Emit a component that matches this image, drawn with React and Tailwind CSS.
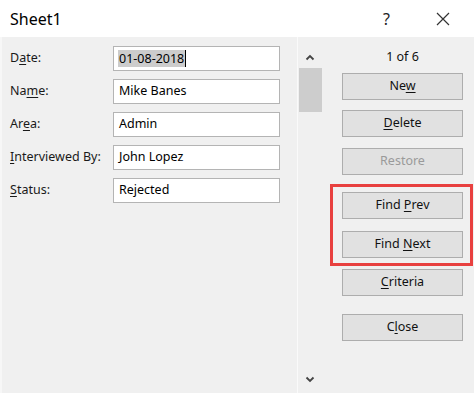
import React from 'react';

const font = { fontFamily: '"Noto Sans", "Segoe UI", sans-serif' };

function Key({ children }) {
  return <span className="underline underline-offset-2 decoration-1">{children}</span>;
}

function Field({ label, value, selected }) {
  return (
    <div className="flex items-center h-[25px]">
      <div className="w-[111px] shrink-0 whitespace-nowrap pl-[8px] text-[12.5px] text-[#1a1a1a]">{label}</div>
      <div className="w-[167px] shrink-0 h-[25px] bg-white border border-[#b4b4b4] flex items-center pl-[4px] text-[12.5px] text-black">
        {selected ? (
          <>
            <span className="bg-[#cccccc] px-[1px] leading-[17px]">{value}</span>
            <span className="w-px h-[17px] bg-black" />
          </>
        ) : (
          <span className="pl-[1px]">{value}</span>
        )}
      </div>
    </div>
  );
}

function Btn({ children, disabled }) {
  return (
    <button
      className={
        'w-[121px] h-[27px] bg-[#e1e1e1] border border-[#adadad] text-[12.5px] flex items-center justify-center ' +
        (disabled ? 'text-[#9a9a9a]' : 'text-[#111111]')
      }
    >
      <span>{children}</span>
    </button>
  );
}

function Chevron({ up }) {
  return (
    <svg width="10" height="7" viewBox="0 0 10 7">
      <polyline
        points={up ? '1.5,5.5 5,2 8.5,5.5' : '1.5,1.5 5,5 8.5,1.5'}
        fill="none"
        stroke="#444"
        strokeWidth="1.8"
      />
    </svg>
  );
}

export default function App() {
  return (
    <div className="w-[474px] h-[397px] bg-white flex flex-col" style={font}>
      <div className="h-[37px] flex items-center pl-[10px] pr-[24px] bg-white">
        <span className="text-[16px] text-black">Sheet1</span>
        <span className="ml-auto text-[16px] text-[#222]">?</span>
        <svg className="ml-[46px]" width="14" height="14" viewBox="0 0 14 14">
          <path d="M1 1 L13 13 M13 1 L1 13" stroke="#333" strokeWidth="1.2" />
        </svg>
      </div>

      <div className="h-[356px] bg-[#f0f0f0] flex border-l-2 border-[#f7f7f7]">
        <div className="w-[295px] shrink-0 pt-[9px] flex flex-col gap-[8px]">
          <Field label={<>D<Key>a</Key>te:</>} value="01-08-2018" selected />
          <Field label={<>Na<Key>m</Key>e:</>} value="Mike Banes" />
          <Field label={<>Ar<Key>e</Key>a:</>} value="Admin" />
          <Field label={<><Key>I</Key>nterviewed By:</>} value="John Lopez" />
          <Field label={<><Key>S</Key>tatus:</>} value="Rejected" />
        </div>

        <div className="w-[25px] shrink-0 border-l border-[#fafafa] flex flex-col items-center">
          <div className="h-[31px] pt-[17px] flex justify-center">
            <Chevron up />
          </div>
          <div className="w-[23px] h-[44px] bg-[#cdcdcd]" />
          <div className="flex-1" />
          <div className="pb-[10px] flex justify-center">
            <Chevron />
          </div>
        </div>

        <div className="flex-1 flex flex-col pl-[20px]">
          <div className="w-[121px] h-[20px] mt-[10px] text-center text-[12.5px] text-[#111] leading-[20px]">1 of 6</div>
          <div className="mt-[6px]">
            <Btn>Ne<Key>w</Key></Btn>
          </div>
          <div className="mt-[10px]">
            <Btn><Key>D</Key>elete</Btn>
          </div>
          <div className="mt-[11px]">
            <Btn disabled>Restore</Btn>
          </div>
          <div className="mt-[9px] ml-[-12px] w-[143px] border-[3px] border-[#e8403f] pl-[9px] pt-[5px] pb-[5px] flex flex-col gap-[12px]">
            <Btn>Find <Key>P</Key>rev</Btn>
            <Btn>Find <Key>N</Key>ext</Btn>
          </div>
          <div className="mt-[3px]">
            <Btn><Key>C</Key>riteria</Btn>
          </div>
          <div className="mt-[18px]">
            <Btn>C<Key>l</Key>ose</Btn>
          </div>
        </div>
      </div>
    </div>
  );
}
